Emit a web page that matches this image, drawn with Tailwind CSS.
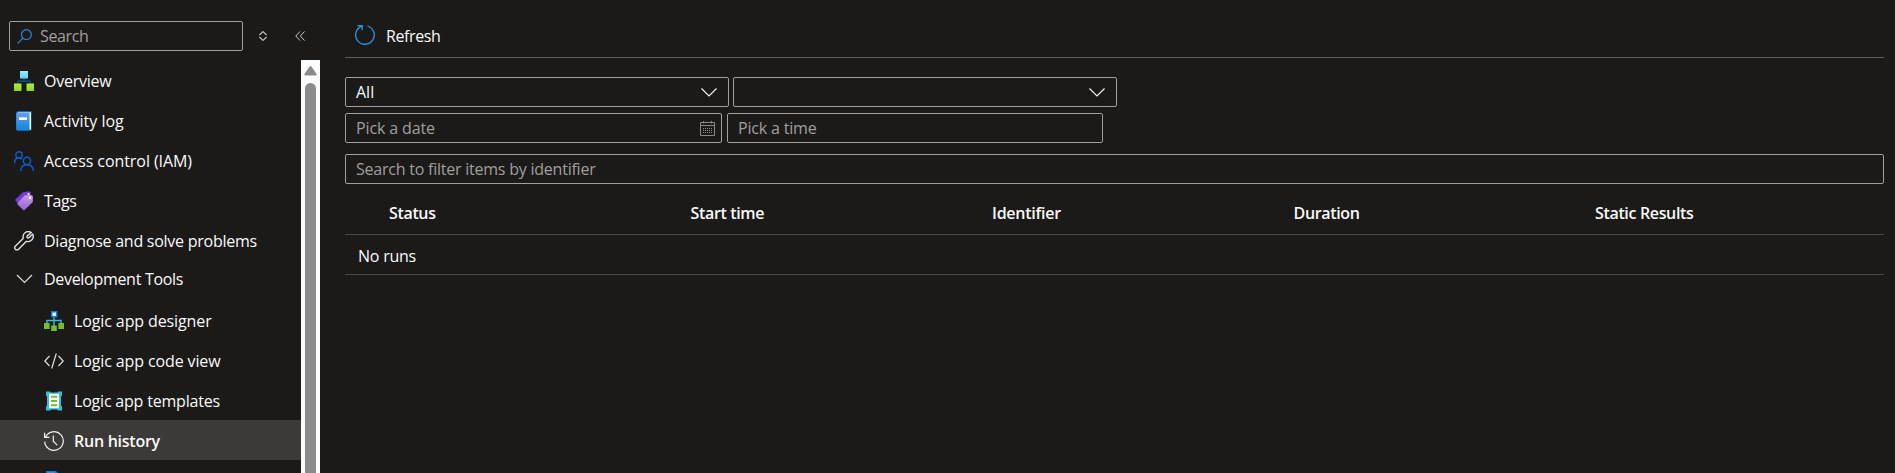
<!DOCTYPE html>
<html lang="en">
<head>
<meta charset="utf-8">
<title>Run history</title>
<script src="https://cdn.jsdelivr.net/npm/@tailwindcss/browser@4"></script>
</head>
<body class="h-[473px] overflow-hidden bg-[#1b1a19] font-['Open_Sans',sans-serif] text-base leading-5 text-[#faf9f8]">
<div class="flex h-[473px]">
  <aside class="flex w-[320px] shrink-0 flex-col">
    <div class="flex h-[60px] items-center pl-[9px] pt-3">
      <div class="flex h-[30px] w-[234px] items-center gap-2 rounded-xs border border-[#a19f9d] pl-[7px] text-[#a19f9d]">
        <svg class="size-[15px]" viewBox="0 0 15 15" fill="none" stroke="#2b88d8" stroke-width="1.2"><circle cx="9.4" cy="5.6" r="4.9"/><path d="M5.9 9.1.4 14.6"/></svg>
        <span class="tracking-[-0.35px]">Search</span>
      </div>
      <svg class="ml-4 h-[10px] w-[8px]" viewBox="0 0 8 10" fill="none" stroke="#c8c6c4" stroke-width="1.1"><path d="M.4 4 4 .6 7.600 4M.4 6 4 9.4 7.600 6"/></svg>
      <svg class="ml-7 h-[10px] w-[10px]" viewBox="0 0 10 10" fill="none" stroke="#c8c6c4"><path d="M5 .5.8 5 5 9.500M9.500.5 5.300 5l4.200 4.500"/></svg>
    </div>
    <div class="flex min-h-0 flex-1">
      <nav class="flex w-[301px] flex-col overflow-hidden *:flex *:h-10 *:shrink-0 *:items-center *:gap-[10px] *:pt-[2px] *:pl-[14px]">
        <a>
          <svg class="size-5" viewBox="0 0 20 20"><defs><linearGradient id="c" x2="0" y2="1"><stop stop-color="#9cebff"/><stop offset="1" stop-color="#50d5f5"/></linearGradient><linearGradient id="g" x2="0" y2="1"><stop stop-color="#b4ec36"/><stop offset="1" stop-color="#86d633"/></linearGradient></defs><path d="M10 7v3M3.700 13v-1.500q0-1.300 1.300-1.300h10q1.300 0 1.300 1.300V13" fill="none" stroke="#005ba1" stroke-width="1.200"/><path d="M6 0h8v7.600H6z" fill="url(#c)"/><path d="M0 12.600h7.500V20H0zM12.500 12.600H20V20h-7.500z" fill="url(#g)"/></svg>
          <span class="tracking-[-0.24px]">Overview</span>
        </a>
        <a>
          <svg class="size-5" viewBox="0 0 20 20"><defs><linearGradient id="b" x2="0" y2="1"><stop stop-color="#5ea0ef"/><stop offset="1" stop-color="#0f86dc"/></linearGradient></defs><path d="M4.500 0H17.500v19.500H4.500A2.300 2.300 0 0 1 2.200 17V2.300A2.300 2.300 0 0 1 4.500 0z" fill="#0f6cbd"/><path d="M4 1.300h13V18.500H4z" fill="#fff"/><path d="M2.200 3q0-1.400 1.400-1.400h12v17.800h-12Q2.200 19.400 2.200 18z" fill="url(#b)"/><path d="M5 6.300h8v2.700H5z" fill="#fff"/></svg>
          <span>Activity log</span>
        </a>
        <a>
          <svg class="size-5" viewBox="0 0 20 20" fill="none" stroke="#0b5ed0" stroke-width="1.400"><circle cx="5" cy="3.900" r="3.200"/><path d="M.600 12.200V11q.400-4 4.400-4 1.800 0 3 1.200"/><circle cx="13" cy="9.900" r="3.600"/><path d="M6.800 20v-1q.500-5.300 6.200-5.300t6.300 5.300v1"/></svg>
          <span class="tracking-[-0.07px]">Access control (IAM)</span>
        </a>
        <a>
          <svg class="size-5" viewBox="0 0 20 20"><defs><linearGradient id="t" x2="0" y2="1"><stop stop-color="#c69aeb"/><stop offset="1" stop-color="#9463d0"/></linearGradient></defs><path d="M9 1.200 15 .200l1.800 1.300V7l-9 9-6.300-6.300q-.700-.700 0-1.500z" fill="#773adc"/><path d="m10.800 4.300 6.800-.100q1.300.100 1.300 1.400l-.100 5.400-8.200 8q-.700.600-1.400 0L3.600 13.400q-.600-.700 0-1.400z" fill="url(#t)"/><circle cx="14.400" cy="2.900" r="1" fill="#fff"/><circle cx="16" cy="6.900" r="1.300" fill="#fff"/><path d="m14.600 3 1.400 2.700" stroke="#eee" stroke-width=".6"/></svg>
          <span class="tracking-[-0.4px]">Tags</span>
        </a>
        <a>
          <svg class="size-5" viewBox="0 0 20 20" fill="none" stroke="#e1dfdd" stroke-width="1.400" stroke-linejoin="round"><path d="M17.300 1.500A5.200 5.200 0 0 0 9.300 7.200L1.300 15.200a2.200 2.200 0 0 0 0 3 2.300 2.300 0 0 0 3.300 0l7.800-7.900a5.200 5.200 0 0 0 6.300-7.200l-3.600 3.600q-1.300.600-1.900-.100-.600-.900.100-1.700z"/></svg>
          <span class="tracking-[-0.25px]">Diagnose and solve problems</span>
        </a>
        <a class="-mt-[2px] mb-[2px]">
          <svg class="size-5" viewBox="0 0 20 20" fill="none" stroke="#e1dfdd" stroke-width="1.200"><path d="m3 6 7.500 7.500L18 6"/></svg>
          <span class="tracking-[-0.3px]">Development Tools</span>
        </a>
        <a class="ml-[30px]">
          <svg class="size-5" viewBox="0 0 20 20"><path d="M10 6v9M3 12V9.500h14V12" fill="none" stroke="#32bedd" stroke-width="1.400"/><path d="M7.700.800h5v5h-5z" fill="#fff" stroke="#0f78d4" stroke-width="1.600"/><path d="M0 12h5.600v6H0zM14.400 12H20v6h-5.600zM7.200 14.500h5.600V20H7.200z" fill="#76bc2d"/></svg>
          <span class="tracking-[-0.11px]">Logic app designer</span>
        </a>
        <a class="ml-[30px]">
          <svg class="size-5" viewBox="0 0 20 20" fill="none" stroke="#e1dfdd" stroke-width="1.200"><path d="M5.500 5 .800 10l4.700 5M14.500 5l4.700 5-4.700 5M12.300 2.500l-4.600 15"/></svg>
          <span class="tracking-[-0.12px]">Logic app code view</span>
        </a>
        <a class="ml-[30px]">
          <svg class="size-5" viewBox="0 0 20 20"><path d="M2 .500h4l1 1h6l1-1h4v4l-1 1v9l1 1v4h-4l-1-1H7l-1 1H2v-4l1-1v-9l-1-1z" fill="#32bedd"/><path d="M5 2.800h10v14.400H5z" fill="#fff"/><path d="M7 4.800h6v2H7zM7 9h6v2H7zM7 13.200h6v2H7z" fill="#76bc2d"/></svg>
          <span class="tracking-[-0.2px]">Logic app templates</span>
        </a>
        <a class="bg-[#3b3a39] font-semibold">
          <svg class="ml-[30px] size-5" viewBox="0 0 20 20" fill="none" stroke="#f3f2f1" stroke-width="1.200"><path d="M1.700 5.800a9.300 9.300 0 1 1-1 4.800M.600 1.800v4.600h4.800M9.300 4.500v5.800l3.900 3.800"/></svg>
          <span class="tracking-[-0.25px]">Run history</span>
        </a>
        <a class="ml-[30px]">
          <svg class="size-5" viewBox="0 0 20 20"><path d="M2 0h10l4 4v16H2z" fill="#0f78d4"/><path d="M3.500 1.500H11V5h4v13H3.500z" fill="#5ea0ef"/></svg>
        </a>
      </nav>
      <div class="flex w-[19px] flex-col items-center bg-[#fcfcfc]">
        <svg class="mt-[6px] h-[10px] w-[13px]" viewBox="0 0 13 10"><path d="M5.600.600q.900-1.100 1.800 0l5 7.200q.700 1.600-1 1.700H1.600Q-.100 9.400.600 7.800z" fill="#8b8b8b"/></svg>
        <div class="mt-[7px] w-[11px] flex-1 rounded-t-full bg-[#8b8b8b]"></div>
      </div>
    </div>
  </aside>

  <main class="flex min-w-0 flex-1 flex-col pr-[11px] pl-[25px]">
    <div class="flex h-[58px] items-center gap-[11px] border-b border-[#605e5c] pt-[14px] pl-[10px]">
      <svg class="mb-px size-5" viewBox="0 0 20 20" fill="none" stroke="#2b95e9" stroke-width="1.300"><path d="M12.500 1a9.300 9.300 0 1 1-6 .300M2.500.700h4.700v4.500"/></svg>
      <span class="tracking-[-0.4px]">Refresh</span>
    </div>
    <div class="mt-[19px] flex gap-1">
      <div class="flex h-[30px] w-[384px] items-center justify-between rounded-xs border border-[#a19f9d] pr-[11px] pl-[10px]"><span>All</span>
        <svg class="h-[10px] w-4" viewBox="0 0 16 10" fill="none" stroke="#f3f2f1" stroke-width="1.200"><path d="m.500 1.500 7.500 7.500L15.500 1.500"/></svg></div>
      <div class="flex h-[30px] w-[384px] items-center justify-end rounded-xs border border-[#a19f9d] pr-[11px]">
        <svg class="h-[10px] w-4" viewBox="0 0 16 10" fill="none" stroke="#f3f2f1" stroke-width="1.200"><path d="m.500 1.500 7.500 7.500L15.500 1.500"/></svg></div>
    </div>
    <div class="mt-[6px] flex gap-[5px] text-[#a19f9d]">
      <div class="flex h-[30px] w-[377px] items-center justify-between rounded-xs border border-[#a19f9d] pr-[6px] pl-[10px]"><span class="tracking-[-0.12px]">Pick a date</span>
        <svg class="h-[15px] w-[15px]" viewBox="0 0 15 15" fill="none" stroke="#8a8886"><path d="M.500 1.500h14v13H.500zM.500 4.500h14M3.500 0v2.500M11.500 0v2.500"/><path d="M3 7.500h9.500M3 9.500h9.500M3 11.500h9.500" stroke-dasharray="1 1"/></svg></div>
      <div class="flex h-[30px] w-[376px] items-center rounded-xs border border-[#a19f9d] pl-[10px]"><span class="tracking-[-0.18px]">Pick a time</span></div>
    </div>
    <div class="mt-[11px] flex h-[30px] items-center rounded-xs border border-[#a19f9d] pl-[10px] text-[#a19f9d]"><span class="tracking-[-0.23px]">Search to filter items by identifier</span></div>
    <div class="flex h-[51px] items-center border-b border-[#484644] pt-2 pl-[44px] font-semibold tracking-[-0.34px] *:w-[301.500px] *:shrink-0">
      <div>Status</div><div>Start time</div><div class="tracking-[-0.24px]">Identifier</div><div>Duration</div><div>Static Results</div>
    </div>
    <div class="flex h-10 items-center border-b border-[#484644] pt-[3px] pl-[13px] tracking-[-0.23px]">No runs</div>
  </main>
</div>
</body>
</html>
